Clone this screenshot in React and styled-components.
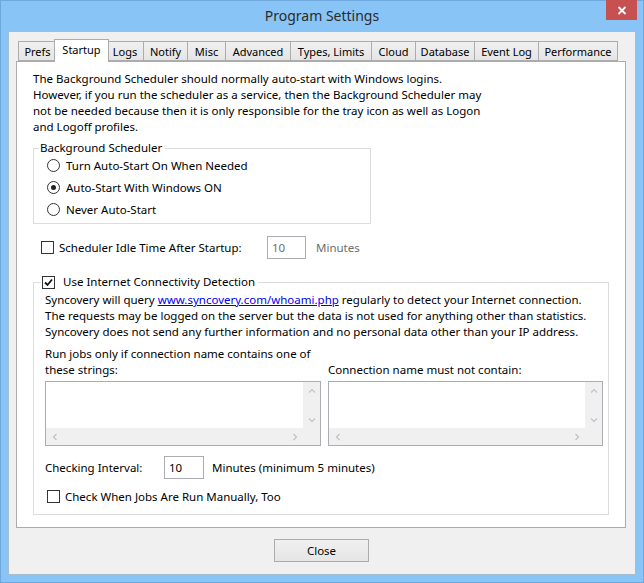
import React from "react";
import styled, { createGlobalStyle } from "styled-components";

const GlobalStyle = createGlobalStyle`
  html, body {
    margin: 0;
    padding: 0;
    background: #fff;
  }
  body {
    font-family: "Noto Sans", "Open Sans", sans-serif;
    font-size: 11.5px;
    color: #000;
  }
`;

const tabs = [
  { label: "Prefs", w: 38 },
  { label: "Startup", w: 50 },
  { label: "Logs", w: 37 },
  { label: "Notify", w: 44 },
  { label: "Misc", w: 38 },
  { label: "Advanced", w: 65 },
  { label: "Types, Limits", w: 81 },
  { label: "Cloud", w: 44 },
  { label: "Database", w: 59 },
  { label: "Event Log", w: 64 },
  { label: "Performance", w: 79 },
];

const Window = styled.div`
  width: 644px;
  height: 583px;
  box-sizing: border-box;
  background: #88c4f5;
  border: 1px solid #6fa8dc;
  padding: 0 7px 7px 7px;
  display: flex;
  flex-direction: column;
`;

const TitleBar = styled.div`
  height: 30px;
  display: grid;
  grid-template-columns: 1fr auto 1fr;
  align-items: start;
`;

const Title = styled.div`
  grid-column: 2;
  font-size: 14px;
  line-height: 30px;
  color: #2b2b2b;
`;

const CloseX = styled.div`
  grid-column: 3;
  justify-self: end;
  width: 31px;
  height: 20px;
  margin-top: -1px;
  margin-right: -1px;
  background: #c75050;
  display: flex;
  align-items: center;
  justify-content: center;
`;

const Client = styled.div`
  flex: 1;
  background: #f0f0f0;
  border: 1px solid #a6bccf;
  padding: 7px 9px 12px 7px;
  display: flex;
  flex-direction: column;
  align-items: flex-start;
`;

const TabRow = styled.div`
  display: flex;
  align-items: flex-end;
  height: 22px;
  margin-left: 2px;
  font-size: 11px;
`;

const Tab = styled.div`
  box-sizing: border-box;
  width: ${(p) => p.$w + (p.$active ? 5 : 1)}px;
  height: ${(p) => (p.$active ? 23 : 20)}px;
  margin-left: ${(p) => (p.$first ? 0 : p.$active ? -3 : -1)}px;
  margin-right: ${(p) => (p.$active ? -2 : 0)}px;
  margin-bottom: ${(p) => (p.$active ? -1 : 0)}px;
  border: 1px solid #acacac;
  border-bottom: ${(p) => (p.$active ? "none" : "1px solid #acacac")};
  background: ${(p) => (p.$active ? "#fff" : "linear-gradient(#f0f0f0, #e5e5e5)")};
  position: relative;
  z-index: ${(p) => (p.$active ? 2 : 0)};
  display: flex;
  align-items: center;
  justify-content: center;
  padding-bottom: ${(p) => (p.$active ? 3 : 0)}px;
  white-space: nowrap;
`;

const Panel = styled.div`
  box-sizing: border-box;
  width: 610px;
  height: 467px;
  background: #fff;
  border: 1px solid #acacac;
  padding: 9px 16px 0 16px;
  position: relative;
  z-index: 1;
`;

const Para = styled.p`
  margin: 0;
  line-height: ${(p) => p.$lh || 16}px;
  white-space: nowrap;
`;

const Group = styled.fieldset`
  box-sizing: border-box;
  width: ${(p) => p.$w}px;
  margin: ${(p) => p.$mt}px 0 0 0;
  padding: 0 0 ${(p) => p.$pb}px 0;
  min-width: 0;
  border: 1px solid #dcdcdc;
`;

const Legend = styled.legend`
  margin-left: ${(p) => p.$ml}px;
  padding: 0 3px 0 1px;
  line-height: 16px;
  display: flex;
  align-items: center;
  gap: ${(p) => p.$gap || 0}px;
`;

const RadioList = styled.div`
  margin-top: -2px;
  padding-left: 13px;
  display: flex;
  flex-direction: column;
`;

const RadioRow = styled.label`
  height: 22px;
  display: flex;
  align-items: center;
  gap: 6px;
`;

const RadioDot = styled.span`
  box-sizing: border-box;
  width: 13px;
  height: 13px;
  border-radius: 50%;
  border: 1px solid #333;
  background: #fff;
  display: flex;
  align-items: center;
  justify-content: center;
  &::after {
    content: "";
    width: 5px;
    height: 5px;
    border-radius: 50%;
    background: ${(p) => (p.$on ? "#222" : "transparent")};
  }
`;

const Box = styled.span`
  box-sizing: border-box;
  flex: none;
  width: 13px;
  height: 13px;
  border: 1px solid #333;
  background: #fff;
  display: flex;
  align-items: center;
  justify-content: center;
`;

const Row = styled.div`
  display: flex;
  align-items: center;
  height: ${(p) => p.$h || 23}px;
  margin-top: ${(p) => p.$mt}px;
  padding-left: ${(p) => p.$pl || 0}px;
`;

const CheckLabel = styled.label`
  display: flex;
  align-items: center;
  gap: ${(p) => p.$gap || 5}px;
  width: ${(p) => (p.$w ? `${p.$w}px` : "auto")};
  white-space: nowrap;
`;

const FieldLabel = styled.span`
  width: ${(p) => p.$w}px;
  white-space: nowrap;
`;

const NumBox = styled.div`
  box-sizing: border-box;
  width: ${(p) => p.$w}px;
  height: 23px;
  border: 1px solid #abadb3;
  background: #fff;
  padding-left: 4px;
  display: flex;
  align-items: center;
  color: ${(p) => (p.$disabled ? "#6d6d6d" : "#000")};
`;

const Unit = styled.span`
  margin-left: ${(p) => p.$ml}px;
  color: ${(p) => (p.$disabled ? "#6d6d6d" : "#000")};
  white-space: nowrap;
`;

const Inner = styled.div`
  padding-left: 11px;
`;

const Link = styled.a`
  color: #0000ee;
  text-decoration: underline;
`;

const ListGrid = styled.div`
  display: grid;
  grid-template-columns: 276px 275px;
  column-gap: 7px;
  row-gap: 3px;
  margin-top: 6px;
  align-items: end;
`;

const TextArea = styled.div`
  box-sizing: border-box;
  height: 65px;
  border: 1px solid #abadb3;
  display: grid;
  grid-template-columns: 1fr 17px;
  grid-template-rows: 1fr 17px;
  background: #fff;
`;

const VBar = styled.div`
  background: #f0f0f0;
  display: flex;
  flex-direction: column;
  justify-content: space-between;
`;

const HBar = styled.div`
  background: #f0f0f0;
  display: flex;
  justify-content: space-between;
`;

const Corner = styled.div`
  background: #f0f0f0;
`;

const Arrow = styled.span`
  width: 17px;
  height: 17px;
  display: flex;
  align-items: center;
  justify-content: center;
`;

const Footer = styled.div`
  align-self: stretch;
  display: flex;
  justify-content: center;
  margin-top: 11px;
`;

const Button = styled.button`
  box-sizing: border-box;
  width: 95px;
  height: 23px;
  margin-left: 1px;
  border: 1px solid #acacac;
  background: linear-gradient(#f0f0f0, #e5e5e5);
  font-family: inherit;
  font-size: 11.5px;
  color: #000;
  padding: 0;
`;

const chevrons = {
  up: "M1 4.5 L4 1.5 L7 4.5",
  down: "M1 1.5 L4 4.5 L7 1.5",
  left: "M4.5 1 L1.5 4 L4.5 7",
  right: "M1.5 1 L4.5 4 L1.5 7",
};

const Chevron = ({ dir }) => {
  const horiz = dir === "left" || dir === "right";
  return (
    <Arrow>
      <svg width={horiz ? 6 : 8} height={horiz ? 8 : 6} viewBox={horiz ? "0 0 6 8" : "0 0 8 6"}>
        <path d={chevrons[dir]} fill="none" stroke="#c2c2c2" strokeWidth="1.2" />
      </svg>
    </Arrow>
  );
};

const Check = ({ checked }) => (
  <Box>
    {checked && (
      <svg width="9" height="9" viewBox="0 0 9 9">
        <path d="M1 4.5 L3.5 7 L8 1.5" fill="none" stroke="#111" strokeWidth="1.8" />
      </svg>
    )}
  </Box>
);

const ListBox = () => (
  <TextArea>
    <div />
    <VBar>
      <Chevron dir="up" />
      <Chevron dir="down" />
    </VBar>
    <HBar>
      <Chevron dir="left" />
      <Chevron dir="right" />
    </HBar>
    <Corner />
  </TextArea>
);

const App = () => {
  return (
    <>
      <GlobalStyle />
      <Window>
        <TitleBar>
          <Title>Program Settings</Title>
          <CloseX>
            <svg width="10" height="9" viewBox="0 0 10 9">
              <path d="M1.5 1 L8.5 8 M8.5 1 L1.5 8" stroke="#fff" strokeWidth="1.8" />
            </svg>
          </CloseX>
        </TitleBar>
        <Client>
          <TabRow>
            {tabs.map((t, i) => (
              <Tab key={t.label} $w={t.w} $first={i === 0} $active={t.label === "Startup"}>
                {t.label}
              </Tab>
            ))}
          </TabRow>
          <Panel>
            <Para>
              The Background Scheduler should normally auto-start with Windows logins.
              <br />
              However, if you run the scheduler as a service, then the Background Scheduler may
              <br />
              not be needed because then it is only responsible for the tray icon as well as Logon
              <br />
              and Logoff profiles.
            </Para>

            <Group $w={338} $mt={5} $pb={3}>
              <Legend $ml={5}>Background Scheduler</Legend>
              <RadioList>
                <RadioRow>
                  <RadioDot />
                  Turn Auto-Start On When Needed
                </RadioRow>
                <RadioRow>
                  <RadioDot $on />
                  Auto-Start With Windows ON
                </RadioRow>
                <RadioRow>
                  <RadioDot />
                  Never Auto-Start
                </RadioRow>
              </RadioList>
            </Group>

            <Row $mt={12} $pl={8}>
              <CheckLabel $w={226}>
                <Check />
                Scheduler Idle Time After Startup:
              </CheckLabel>
              <NumBox $w={39} $disabled>10</NumBox>
              <Unit $ml={10} $disabled>Minutes</Unit>
            </Row>

            <Group $w={576} $mt={15} $pb={10}>
              <Legend $ml={7} $gap={8}>
                <Check checked />
                Use Internet Connectivity Detection
              </Legend>
              <Inner>
                <Para $lh={16} style={{ marginTop: 2 }}>
                  Syncovery will query <Link href="#">www.syncovery.com/whoami.php</Link> regularly to detect your Internet connection.
                  <br />
                  The requests may be logged on the server but the data is not used for anything other than statistics.
                  <br />
                  Syncovery does not send any further information and no personal data other than your IP address.
                </Para>
                <ListGrid>
                  <Para>
                    Run jobs only if connection name contains one of
                    <br />
                    these strings:
                  </Para>
                  <Para>Connection name must not contain:</Para>
                  <ListBox />
                  <ListBox />
                </ListGrid>
                <Row $mt={10}>
                  <FieldLabel $w={119}>Checking Interval:</FieldLabel>
                  <NumBox $w={40}>10</NumBox>
                  <Unit $ml={8}>Minutes (minimum 5 minutes)</Unit>
                </Row>
                <Row $mt={9} $h={16} $pl={2}>
                  <CheckLabel>
                    <Check />
                    Check When Jobs Are Run Manually, Too
                  </CheckLabel>
                </Row>
              </Inner>
            </Group>
          </Panel>
          <Footer>
            <Button>Close</Button>
          </Footer>
        </Client>
      </Window>
    </>
  );
};

export default App;
